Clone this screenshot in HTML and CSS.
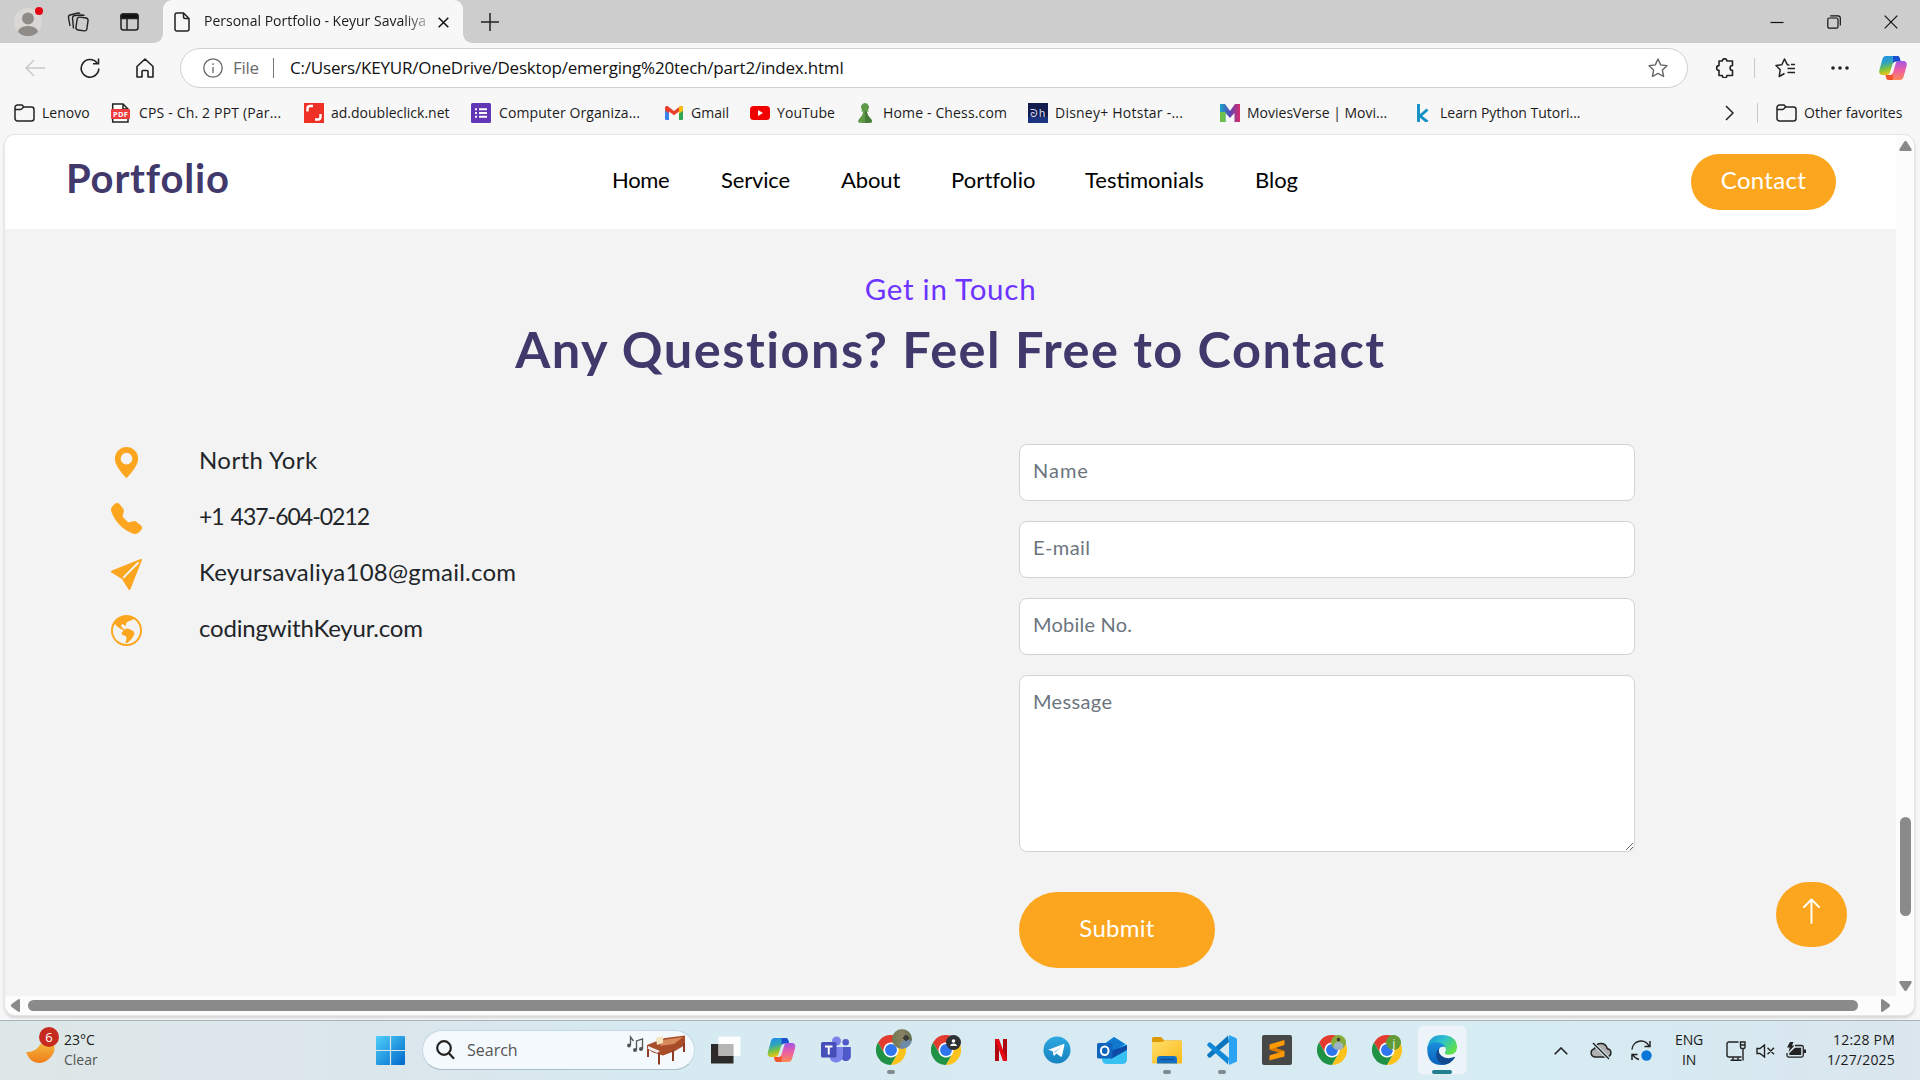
FILE: index.html
```html
<!DOCTYPE html>
<html lang="en">
<head>
<meta charset="utf-8">
<title>Personal Portfolio - Keyur Savaliya</title>
<link rel="stylesheet" href="styles.css">
</head>
<body>
<svg class="defs" aria-hidden="true">
  <defs>
    <linearGradient id="cp1" x1="0" y1="0" x2="0.3" y2="1"><stop offset="0" stop-color="#1a8df0"/><stop offset=".4" stop-color="#2fa3c0"/><stop offset=".7" stop-color="#7cc242"/><stop offset="1" stop-color="#f2c40f"/></linearGradient>
    <linearGradient id="cp2" x1="0" y1="0" x2="0" y2="1"><stop offset="0" stop-color="#a355e8"/><stop offset=".5" stop-color="#ee5fa0"/><stop offset="1" stop-color="#fb8a56"/></linearGradient>
    <linearGradient id="win" x1="0" y1="0" x2="1" y2="1"><stop offset="0" stop-color="#4fd0fb"/><stop offset="1" stop-color="#0067c9"/></linearGradient>
    <linearGradient id="moon" x1="0" y1="0" x2="0" y2="1"><stop offset="0" stop-color="#f3b53a"/><stop offset="1" stop-color="#ef7c1a"/></linearGradient>
    <linearGradient id="fold" x1="0" y1="0" x2="1" y2="1"><stop offset="0" stop-color="#ffdf6b"/><stop offset="1" stop-color="#fbb91a"/></linearGradient>
    <linearGradient id="edge1" x1="0" y1="0" x2="1" y2=".6"><stop offset="0" stop-color="#1a8fd6"/><stop offset=".5" stop-color="#2cc0d0"/><stop offset="1" stop-color="#5fe04a"/></linearGradient>
    <linearGradient id="edge2" x1="0" y1="0" x2="0" y2="1"><stop offset="0" stop-color="#1b8fdc"/><stop offset="1" stop-color="#0b62bd"/></linearGradient>
    <linearGradient id="tg" x1="0" y1="0" x2="0" y2="1"><stop offset="0" stop-color="#2fa8e0"/><stop offset="1" stop-color="#1583c0"/></linearGradient>
    <linearGradient id="mv" x1="0" y1="0" x2="1" y2="0"><stop offset="0" stop-color="#19a7c9"/><stop offset=".5" stop-color="#5946b5"/><stop offset="1" stop-color="#d92a6b"/></linearGradient>
    <symbol id="copilot" viewBox="0 0 28 26">
      <path d="M7 1h11c2 0 2.500 1 3 3l.6 2.500h-4.500c-2 0-3 1-3.600 3L11 17c-.6 2-1.500 3-3.500 3H3.500C.5 20-.3 17.500.5 14.500L3.500 4C4.200 2 5 1 7 1z" fill="url(#cp1)"/>
      <path d="M14 1h4c2 0 2.500 1 3 3l.6 2.500h-4.500c-1.400 0-2.300.5-3 1.600z" fill="#1c4fd0"/>
      <path d="M21 25H10c-2 0-2.500-1-3-3l-.5-2h4.500c2 0 2.600-1 3.200-3L16.500 9c.6-2 1.500-3 3.500-3h4.500c3 0 3.800 2.500 3 5.500L24.500 22c-.7 2-1.500 3-3.500 3z" fill="url(#cp2)"/>
      <path d="M14 25h-4c-2 0-2.500-1-3-3l-.5-2h4.500c1.400 0 2.300-.5 3-1.600z" fill="#f2542d"/>
    </symbol>
    <symbol id="chrome" viewBox="0 0 48 48">
      <circle cx="24" cy="24" r="13" fill="#fff"/>
      <path d="M24 12h20.800A24 24 0 0 0 3.200 12l10.400 18A12 12 0 0 1 24 12z" fill="#e33b2e"/>
      <path d="M3.200 12A24 24 0 0 0 24 48l10.400-18a12 12 0 0 1-20.800 0z" fill="#1f9246"/>
      <path d="M44.800 12A24 24 0 0 1 24 48l10.400-18A12 12 0 0 0 24 12z" fill="#fcc31e"/>
      <circle cx="24" cy="24" r="9.500" fill="#2f76ee"/>
    </symbol>
    <symbol id="folder" viewBox="0 0 21 18">
      <path d="M1 4V14.500A2.500 2.500 0 0 0 3.500 17H17.500A2.500 2.500 0 0 0 20 14.500V5.500A2.500 2.500 0 0 0 17.500 3H10L8 1H3.500A2.500 2.500 0 0 0 1 3.500zM1 5.500H6.500C8.500 5.500 8.500 3 10 3" fill="none" stroke="#222" stroke-width="1.500"/>
    </symbol>
  </defs>
</svg>

<div class="tabstrip">
  <div class="avatar">
    <svg width="28" height="28" viewBox="0 0 28 28"><circle cx="14" cy="14" r="14" fill="#d9d8d5"/><circle cx="14" cy="10.500" r="6" fill="#8f8c88"/><path d="M4 24c1-8 19-8 20 0a14 14 0 0 1-20 0z" fill="#8f8c88"/></svg>
    <i class="alert"></i>
  </div>
  <svg class="workspaces" width="22" height="20" viewBox="0 0 22 20" fill="none" stroke="#222" stroke-width="1.400"><rect x="9.500" y="5.500" width="11" height="13" rx="2.500" transform="rotate(8 15 12)"/><path d="M6.500 16.500 5.500 6Q5.500 4 7.500 3.500L15.500 3Q17 3 17.300 4"/><path d="M3 14 1.500 5.500Q1.200 3.500 3 3L11 1Q12.500.8 13 1.800"/></svg>
  <svg class="panes" width="19" height="18" viewBox="0 0 19 18" fill="none" stroke="#222" stroke-width="1.500"><rect x="1" y="1" width="17" height="16" rx="2.500"/><path d="M1 3.500V3a2 2 0 0 1 2-2h13a2 2 0 0 1 2 2v2.500H1z" fill="#111"/><path d="M7 5v12"/></svg>
  <div class="tab">
    <svg width="16" height="20" viewBox="0 0 16 20" fill="none" stroke="#222" stroke-width="1.500"><path d="M9.500 1H3a2 2 0 0 0-2 2v14a2 2 0 0 0 2 2h10a2 2 0 0 0 2-2V6.500zM9.500 1v4a1.500 1.500 0 0 0 1.500 1.500h4"/></svg>
    <span class="tab-title">Personal Portfolio - Keyur Savaliya</span>
    <svg width="11" height="11" viewBox="0 0 11 11" stroke="#111" stroke-width="1.500"><path d="M.7.700l9.600 9.600M10.300.700L.7 10.300"/></svg>
  </div>
  <svg class="newtab" width="18" height="18" viewBox="0 0 18 18" stroke="#222" stroke-width="1.500"><path d="M9 0v18M0 9h18"/></svg>
  <div class="winctl">
    <svg width="14" height="14" viewBox="0 0 14 14" stroke="#111" stroke-width="1.200"><path d="M.5 7.500h13"/></svg>
    <svg width="14" height="14" viewBox="0 0 14 14" fill="none" stroke="#111" stroke-width="1.200"><rect x=".8" y="3" width="10.200" height="10.200" rx="1.500"/><path d="M3.300.8H11a2.300 2.300 0 0 1 2.300 2.300V10.500"/></svg>
    <svg width="14" height="14" viewBox="0 0 14 14" stroke="#111" stroke-width="1.200"><path d="M.7.700l12.600 12.600M13.300.700L.7 13.300"/></svg>
  </div>
</div>

<div class="toolbar">
  <svg class="back" width="20" height="18" viewBox="0 0 20 18" fill="none" stroke="#c9c9c9" stroke-width="1.500"><path d="M20 9H1M9 1L1 9l8 8"/></svg>
  <svg class="reload" width="20" height="20" viewBox="0 0 20 20" fill="none" stroke="#222" stroke-width="1.600"><path d="M18.800 10.500A8.800 8.800 0 1 1 17 5M18.500.5V5.800H13"/></svg>
  <svg class="home" width="18" height="20" viewBox="0 0 18 20" fill="none" stroke="#222" stroke-width="1.600"><path d="M1 8.500 9 1l8 7.500V19h-5v-5.500a1 1 0 0 0-1-1H7a1 1 0 0 0-1 1V19H1z" stroke-linejoin="round"/></svg>
  <div class="address">
    <svg width="20" height="20" viewBox="0 0 20 20" fill="none" stroke="#666" stroke-width="1.300"><circle cx="10" cy="10" r="9.200"/><path d="M10 9v6M10 5.300v1.700"/></svg>
    <span class="scheme">File</span><i class="bar"></i>
    <span class="url">C:/Users/KEYUR/OneDrive/Desktop/emerging%20tech/part2/index.html</span>
    <svg class="star" width="20" height="20" viewBox="0 0 20 20" fill="none" stroke="#666" stroke-width="1.400" stroke-linejoin="round"><path d="M10 1l2.700 5.900 6.300.8-4.600 4.400 1.200 6.400L10 15.400l-5.600 3.100 1.200-6.400L1 7.700l6.300-.8z"/></svg>
  </div>
  <svg class="ext" width="19" height="20" viewBox="0 0 19 20" fill="none" stroke="#222" stroke-width="1.600" stroke-linejoin="round"><path d="M4 3h3.300a2.300 2.300 0 0 1 4.600 0H17.500V7.500a2.400 2.400 0 0 0 0 4.800V17.500h-5.600a2.300 2.300 0 0 1-4.600 0H4v-5.200a2.300 2.300 0 0 1 0-4.700z"/></svg>
  <i class="rule"></i>
  <svg class="favs" width="21" height="20" viewBox="0 0 21 20" fill="none" stroke="#222" stroke-width="1.500" stroke-linejoin="round"><path d="M14.500 7 12.300 6.700 9.500 1 6.800 6.700 1 7.500l4.200 4.200L4.200 18.500 9.500 15.500M12.500 10.500H20M12.500 14.500H20M16 6.500h4"/></svg>
  <svg class="more" width="18" height="4" viewBox="0 0 18 4" fill="#222"><circle cx="2" cy="2" r="1.800"/><circle cx="9" cy="2" r="1.800"/><circle cx="16" cy="2" r="1.800"/></svg>
  <svg class="copilot" width="28" height="26"><use href="#copilot"/></svg>
</div>

<div class="bookmarks">
  <a class="bm bm-lenovo"><svg width="21" height="18"><use href="#folder"/></svg><span>Lenovo</span></a>
  <a class="bm bm-cps"><svg width="19" height="20" viewBox="0 0 19 20"><path d="M1.700 19V1H12l5 5v13z" fill="#fff" stroke="#222" stroke-width="1.500"/><path d="M12 1v5h5" fill="none" stroke="#222" stroke-width="1.500"/><rect y="6" width="19" height="10" rx="1" fill="#ee3b3b"/><text x="9.500" y="13.600" class="pdf-label">PDF</text></svg><span>CPS - Ch. 2 PPT (Par...</span></a>
  <a class="bm bm-ad"><svg width="20" height="20" viewBox="0 0 20 20"><path fill="#ee3124" d="M0 0h20v20H0z"/><path d="M3.500 8.500V5.500a2.500 2.500 0 0 1 2.500-2.500h3M16.500 11v3a2.500 2.500 0 0 1-2.500 2.500h-3" fill="none" stroke="#fff" stroke-width="2.400"/></svg><span>ad.doubleclick.net</span></a>
  <a class="bm bm-forms"><svg width="20" height="20" viewBox="0 0 20 20"><rect width="20" height="20" rx="1.500" fill="#6236b5"/><path d="M4 6.200h2M8 6.200h8M4 10h2M8 10h8M4 13.800h2M8 13.800h8" stroke="#fff" stroke-width="2"/></svg><span>Computer Organiza...</span></a>
  <a class="bm bm-gmail"><svg width="18" height="14" viewBox="0 0 18 14"><path d="M0 2v11a1 1 0 0 0 1 1h3V5z" fill="#3b82ee"/><path d="M18 2v11a1 1 0 0 1-1 1h-3V5z" fill="#30a853"/><path d="M14 1.500 18 2v2.500L14 7.500z" fill="#fbbc04"/><path d="M0 1.800C0 0 2-.4 3.200.5L9 5l5.800-4.500C16-.4 18 0 18 1.800L14 5.500 9 9.300 4 5.500V7.500L0 4.500z" fill="#e8402f"/><path d="M14 1.200v6.300l4-3V1.800C18 0 16-.4 14.800.5z" fill="#fbbc04"/></svg><span>Gmail</span></a>
  <a class="bm bm-yt"><svg width="20" height="14" viewBox="0 0 20 14"><rect width="20" height="14" rx="3.500" fill="#f00000"/><path d="M8 4v6l5-3z" fill="#fff"/></svg><span>YouTube</span></a>
  <a class="bm bm-chess"><svg width="14" height="20" viewBox="0 0 14 20"><path d="M7 0a4 4 0 0 1 2.800 6.800L11 8.500H8.800Q9 12 12 15q2 1.500 2 4.300Q7 21 0 19.300 0 16.500 2 15q3-3 3.200-6.500H3L4.200 6.800A4 4 0 0 1 7 0z" fill="#5d9948"/><path d="M8.800 8.500Q9 12 12 15q2 1.500 2 4.300-3 .7-7 .7V8.500z" fill="#457a37"/></svg><span>Home - Chess.com</span></a>
  <a class="bm bm-hotstar"><svg width="20" height="20" viewBox="0 0 20 20"><path fill="#131c4f" d="M0 0h20v20H0z"/><path fill="#1c3380" d="M0 14h20v6H0z"/><text x="10" y="13.500" class="hs-label">ᘐh</text></svg><span>Disney+ Hotstar -...</span></a>
  <a class="bm bm-movies"><svg width="20" height="18" viewBox="0 0 20 18"><path d="M0 0h5l5 7 5-7h5v18h-5.500V9L10 14 5.500 9v9H0z" fill="url(#mv)"/><path d="M0 8h5.500v10H0z" fill="#6dc04b"/></svg><span>MoviesVerse | Movi...</span></a>
  <a class="bm bm-python"><svg width="12" height="18" viewBox="0 0 12 18"><path d="M1.500 0v18M10.500 5.500 3 12l7.500 6" fill="none" stroke="#1590c4" stroke-width="2.900"/></svg><span>Learn Python Tutori...</span></a>
  <svg class="chev" width="9" height="16" viewBox="0 0 9 16" fill="none" stroke="#222" stroke-width="1.500"><path d="M1 1l7 7-7 7"/></svg>
  <i class="rule"></i>
  <a class="bm bm-other"><svg width="21" height="18"><use href="#folder"/></svg><span>Other favorites</span></a>
</div>

<div class="frame">
  <main class="page">
    <header class="site-header">
      <div class="brand">Portfolio</div>
      <nav class="nav">
        <a class="n-home">Home</a><a class="n-service">Service</a><a class="n-about">About</a><a class="n-portfolio">Portfolio</a><a class="n-test">Testimonials</a><a class="n-blog">Blog</a>
      </nav>
      <a class="btn-contact">Contact</a>
    </header>
    <section class="contact">
      <h3>Get in Touch</h3>
      <h2>Any Questions? Feel Free to Contact</h2>
      <div class="columns">
        <ul class="info">
          <li><svg viewBox="0 0 16 16"><path d="M8 16s6-5.686 6-10A6 6 0 0 0 2 6c0 4.314 6 10 6 10zm0-7a3 3 0 1 1 0-6 3 3 0 0 1 0 6z"/></svg><span class="i-city">North York</span></li>
          <li><svg viewBox="0 0 16 16"><path d="M1.885.511a1.745 1.745 0 0 1 2.610.163L6.290 2.980c.329.423.445.974.315 1.494l-.547 2.190a.678.678 0 0 0 .178.643l2.457 2.457a.678.678 0 0 0 .644.178l2.189-.547a1.745 1.745 0 0 1 1.494.315l2.306 1.794c.829.645.905 1.870.163 2.611l-1.034 1.034c-.74.740-1.846 1.065-2.877.702a18.634 18.634 0 0 1-7.010-4.420 18.634 18.634 0 0 1-4.420-7.009c-.362-1.030-.037-2.137.703-2.877L1.885.511z"/></svg><span class="i-phone">+1 437-604-0212</span></li>
          <li><svg viewBox="0 0 16 16"><path d="M15.964.686a.5.5 0 0 0-.65-.65L.767 5.855H.766l-.452.18a.5.5 0 0 0-.082.887l.41.260.001.002 4.995 3.178 3.178 4.995.002.002.260.410a.5.5 0 0 0 .886-.083l6-15Zm-1.833 1.890L6.637 10.070l-.215-.338a.5.5 0 0 0-.154-.154l-.338-.215 7.494-7.494 1.178-.471-.470 1.178Z"/></svg><span class="i-mail">Keyursavaliya108@gmail.com</span></li>
          <li><svg viewBox="0 0 16 16"><path d="M8 0a8 8 0 1 0 0 16A8 8 0 0 0 8 0ZM2.040 4.326c.325 1.329 2.532 2.540 3.717 3.190.48.263.793.434.743.484-.08.08-.162.158-.242.234-.416.396-.787.749-.758 1.266.035.634.618.824 1.214 1.017.577.188 1.168.38 1.286.983.082.417-.075.988-.22 1.520-.215.782-.406 1.480.22 1.480 1.500-.5 3.798-3.186 4-5 .138-1.243-2-2-3.500-2.500-.478-.16-.755.081-.99.284-.172.15-.322.279-.51.216-.445-.148-2.500-2-1.500-2.500.78-.39.952-.171 1.227.182.078.099.163.208.273.318.609.304.662-.132.723-.633.039-.322.081-.671.277-.867.434-.434 1.265-.791 2.028-1.120.712-.306 1.365-.587 1.579-.88A7 7 0 1 1 2.040 4.327Z"/></svg><span class="i-site">codingwithKeyur.com</span></li>
        </ul>
        <form class="form">
          <input class="f-name" placeholder="Name">
          <input class="f-mail" placeholder="E-mail">
          <input class="f-mobile" placeholder="Mobile No.">
          <textarea class="f-msg" placeholder="Message"></textarea>
          <button type="button">Submit</button>
        </form>
      </div>
    </section>
    <a class="to-top"><svg width="19" height="26" viewBox="0 0 19 26" fill="none" stroke="#fff" stroke-width="1.900" stroke-linecap="round" stroke-linejoin="round"><path d="M9.500 25V1.500M2 9l7.500-7.500L17 9"/></svg></a>
  </main>
  <div class="vscroll">
    <svg width="13" height="10" viewBox="0 0 13 10"><path d="M6.500 0q1 0 1.500 1l4.500 7q.8 2-1 2h-10q-1.800 0-1-2L5 1q.5-1 1.500-1z"/></svg>
    <i class="thumb"></i>
    <svg width="13" height="10" viewBox="0 0 13 10"><path d="M6.500 10q1 0 1.500-1l4.500-7q.8-2-1-2h-10q-1.800 0-1 2L5 9q.5 1 1.500 1z"/></svg>
  </div>
  <div class="hscroll">
    <svg width="9" height="13" viewBox="0 0 9 13"><path d="M0 6.500q0-1 1-1.700L7 .5Q9-.5 9 1v11q0 1.500-2 .5L1 8.200Q0 7.500 0 6.500z"/></svg>
    <i class="thumb"></i>
    <svg width="9" height="13" viewBox="0 0 9 13"><path d="M9 6.500q0-1-1-1.700L2 .5Q0-.5 0 1v11q0 1.500 2 .5l6-4.300q1-.7 1-1.700z"/></svg>
  </div>
</div>

<div class="taskbar">
  <div class="weather">
    <div class="moon"><svg width="29" height="19" viewBox="0 0 29 19"><path d="M0 8q9 1 14.500-8H28q2 8-4 14-5 5-11.500 5Q4 19 0 8z" fill="url(#moon)"/></svg><b>6</b></div>
    <div class="two"><span>23°C</span><span class="dim">Clear</span></div>
  </div>
  <svg class="start" width="29" height="29" viewBox="0 0 29 29" fill="url(#win)"><path d="M1 0h12.900v13.900H0V1a1 1 0 0 1 1-1zM15.100 0H28a1 1 0 0 1 1 1v12.900H15.100zM0 15.100h13.900V29H1a1 1 0 0 1-1-1zM15.100 15.100H29V28a1 1 0 0 1-1 1H15.100z"/></svg>
  <div class="search">
    <svg width="19" height="20" viewBox="0 0 19 20" fill="none" stroke="#222" stroke-width="2.200"><circle cx="8" cy="8" r="6.800"/><path d="M12.500 12.800 18 18.700"/></svg>
    <span>Search</span>
    <svg class="piano" width="59" height="30" viewBox="0 0 59 30"><g fill="none" stroke="#555" stroke-width="1.300"><path d="M3.500 10V2l3 4M9.500 15V6l6-2v10"/></g><g fill="#555"><circle cx="2" cy="10.500" r="2"/><circle cx="8" cy="15" r="2"/><circle cx="14" cy="14" r="2"/></g><path d="M20 10 30 6l8-3 20-2.500v9.500l-10 6-12 4.500-10-3-6-4z" fill="#a84c2a"/><path d="M36 5 56 2l-9 7-14 2z" fill="#d98a5d"/><path d="M21 11l12 5-3 2-9-4z" fill="#eee"/><path d="M29 3l7-2v7l-6 2z" fill="#f4e3bf"/><path d="M21 14v8M32 18v11.500M46 15v11M57 8v9" stroke="#8d3c22" stroke-width="2"/></svg>
  </div>
  <div class="apps">
    <div class="app"><svg width="30" height="30" viewBox="0 0 30 30"><path d="M0 9h22.500v19.500H0z" fill="#2c2b29"/><rect x="7.500" y="1.500" width="22" height="19.500" rx="1" fill="#fff" opacity=".92"/><path d="M7.500 9h15v12h-15z" fill="#b5b5b4"/></svg></div>
    <div class="app"><svg width="29" height="26"><use href="#copilot"/></svg></div>
    <div class="app"><svg width="30" height="28" viewBox="0 0 30 28"><circle cx="15.500" cy="5" r="4.500" fill="#7b83eb"/><circle cx="24.700" cy="6.300" r="3.300" fill="#5059c9"/><path d="M20 11h9.800v8a5 5 0 0 1-9.800 2z" fill="#5059c9"/><path d="M9 11h13v9a7 7 0 0 1-13 3z" fill="#7b83eb"/><rect y="6" width="15.500" height="15.500" rx="1.500" fill="#464eb8"/><path d="M4 10.500h7.500M7.750 10.500v8" stroke="#fff" stroke-width="2"/></svg></div>
    <div class="app run"><svg width="30" height="30"><use href="#chrome"/></svg><i class="badge photo"></i></div>
    <div class="app"><svg width="30" height="30"><use href="#chrome"/></svg><i class="badge dark"><svg width="7" height="8" viewBox="0 0 7 8" fill="#fff"><circle cx="3.500" cy="2" r="1.800"/><path d="M0 7Q.5 4.500 3.500 4.500T7 7z"/></svg></i></div>
    <div class="app"><svg width="12" height="22" viewBox="0 0 12 22"><path d="M0 0h4v22H0zM8 0h4v22H8z" fill="#b00710"/><path d="M0 0h4l8 22H8z" fill="#e50914"/></svg></div>
    <div class="app"><svg width="28" height="28" viewBox="0 0 28 28"><circle cx="14" cy="14" r="13.500" fill="url(#tg)"/><path d="M5.500 13.800 20.500 8q1.200-.3.900 1.200L19 20q-.4 1.300-1.500.6L13.500 17.500l-2 2q-.8.700-1-.4l-1-4-3.900-1q-1-.2-.1-.3z" fill="#fff"/><path d="M10.500 16 18.500 10.500 12 17z" fill="#a9cfe6"/></svg></div>
    <div class="app"><svg width="30" height="27" viewBox="0 0 30 27"><path d="M6 8 17 0l13 8v14q0 5-5 5H10q-5 0-5-5z" fill="#36c1f2"/><path d="M6 8 17 0l11 7-16 11z" fill="#1079cf"/><path d="M14 14 30 8v5L14 22z" fill="#0c4aa6"/><rect y="6" width="15.500" height="15.500" rx="1.500" fill="#0f64bd"/><ellipse cx="7.700" cy="13.700" rx="3.800" ry="4.300" fill="none" stroke="#fff" stroke-width="2"/></svg></div>
    <div class="app run"><svg width="30" height="27" viewBox="0 0 30 27"><path d="M0 1.500Q0 0 1.500 0H9l3.500 3.500H28.500Q30 3.500 30 5v5H0z" fill="#dc9a06"/><path d="M0 5H10l3-1.500H28.500Q30 3.500 30 5V26.500H0z" fill="url(#fold)"/><path d="M5 26.500V22a3 3 0 0 1 3-3h14a3 3 0 0 1 3 3v4.500z" fill="#1470c4"/><path d="M8.500 22.500h13" stroke="#0b4d92" stroke-width="1.400"/></svg></div>
    <div class="app run"><svg width="30" height="30" viewBox="0 0 30 30"><path d="M22 7 3.500 22.500Q2.500 23.300 1.500 22.300L.5 21q-.8-1 .2-2L21 .5z" fill="#0b76bd"/><path d="M22 23 3.500 7.500Q2.500 6.700 1.500 7.700L.5 9q-.8 1 .2 2L21 29.500z" fill="#1289d8"/><path d="M22 0l7 3q1 .5 1 1.500v21q0 1-1 1.500l-7 3z" fill="#2aa3f3"/></svg></div>
    <div class="app"><svg width="30" height="30" viewBox="0 0 30 30"><rect width="30" height="30" rx="2" fill="#474747"/><path d="M22.500 5v5L13 13l9.500 3v5.500L7.500 25.500v-5L17 17.500 7.500 14.500V9.500z" fill="#ff9a05"/><path d="M7.500 14.500 22.500 10l-9.500 3 9.500 3-5.500 1.500z" fill="#d97900"/></svg></div>
    <div class="app"><svg width="30" height="30"><use href="#chrome"/></svg><i class="badge park"></i></div>
    <div class="app"><svg width="30" height="30"><use href="#chrome"/></svg><i class="badge jay">j</i></div>
    <div class="app current"><svg width="30" height="30" viewBox="0 0 30 30"><path d="M.3 13Q2 0 15 0 30 .5 30 12.500q-.5 7-8 7.300-5.500 0-3.700-3Q20 14 17 11 9 5.500.3 13z" fill="url(#edge1)"/><path d="M.3 12.500Q4 6 11 7.500q6 1.200 7 4.500-6-1.500-6.500 5Q12 26 24 26q-4 4-9.500 4Q-.5 29.500.3 12.500z" fill="url(#edge2)"/><path d="M12 13.500q-4 3.500-2.500 9Q12 29 17 29.800 24 29 28 22.500q.3-1-1-.5-4.500 2-9.500.5-6.500-2.500-5.500-9z" fill="#124a91"/></svg></div>
  </div>
  <div class="tray">
    <svg class="up" width="14" height="8" viewBox="0 0 14 8" fill="none" stroke="#222" stroke-width="1.600"><path d="M.7 7.300 7 1l6.300 6.300"/></svg>
    <svg class="cloud" width="22" height="18" viewBox="0 0 22 18"><path d="M5 15a4.200 4.200 0 0 1-.5-8.300Q6 1.500 11 1.500t6.300 5.200a4.200 4.200 0 0 1 0 8.300z" fill="#b0b0b0" stroke="#222" stroke-width="1.500"/><path d="M3 1l16 16" stroke="#d8eaf1" stroke-width="3.400"/><path d="M3 1l16 16" stroke="#222" stroke-width="1.500"/></svg>
    <svg class="sync" width="21" height="21" viewBox="0 0 21 21"><path d="M1 9.500A9 9 0 0 1 18 6M19 1v5.500h-5.500M1 20v-5.500h5.500M2 15q2 3.500 6 4.500" fill="none" stroke="#222" stroke-width="1.500"/><circle cx="15.500" cy="15.500" r="5.200" fill="#0a76d8"/></svg>
    <div class="two lang"><span>ENG</span><span>IN</span></div>
    <svg class="net" width="20" height="20" viewBox="0 0 20 20" fill="none" stroke="#222" stroke-width="1.400"><path d="M12.500 1H3a2 2 0 0 0-2 2v11a2 2 0 0 0 2 2h12.500M4.500 19.300h11M7 16v3M12 16v3M14.500 1h4.500v5q0 1.500-1.500 1.500h-1.500Q14.500 7.500 14.500 6zM14.500 4H19M17 8v11.500"/></svg>
    <svg class="vol" width="19" height="14" viewBox="0 0 19 14" fill="none" stroke="#222" stroke-width="1.400"><path d="M1 4.500h3L8.500 1v12L4 9.500H1zM11.500 3.800l6.500 6.500M18 3.800l-6.500 6.500"/></svg>
    <svg class="bat" width="20" height="17" viewBox="0 0 20 17"><path d="M9 3.500h6.500A1.800 1.800 0 0 1 17.300 5.300v8a1.800 1.800 0 0 1-1.800 1.800H2.800A1.800 1.800 0 0 1 1 13.300V11" fill="none" stroke="#222" stroke-width="1.300"/><path d="M9 5.700h6.200v7.200H3.300V11z" fill="#222"/><path d="M18 7.500h2v3.500h-2zM4 0h3.500L6 3.500h2.500L2.500 10 3.800 5.500H1z" fill="#222"/></svg>
    <div class="two clock"><span>12:28 PM</span><span>1/27/2025</span></div>
  </div>
</div>
</body>
</html>
```
FILE: styles.css
```css
* { box-sizing: border-box; }
body {
  margin: 0;
  width: 1920px;
  height: 1080px;
  overflow: hidden;
  display: flex;
  flex-direction: column;
  background: #f7f7f7;
  color: #1b1b1b;
  font: 14px/20px "Open Sans", "Noto Sans", sans-serif;
}
svg { display: block; flex: none; }
span, a { white-space: nowrap; }
.defs { position: absolute; width: 0; height: 0; }

/* Tab strip */
.tabstrip { height: 43px; flex: none; display: flex; align-items: center; background: #cdcdcd; }
.avatar { position: relative; margin-left: 14px; width: 28px; }
.alert { position: absolute; right: -1px; top: -1px; width: 8px; height: 8px; border-radius: 50%; background: #e30613; }
.workspaces { margin-left: 25px; }
.panes { margin: 0 24px 0 31px; }
.tab {
  position: relative;
  align-self: stretch;
  width: 300px;
  padding: 1px 14px 0 11px;
  display: flex;
  align-items: center;
  background: #f7f7f7;
  border-radius: 9px 9px 0 0;
}
.tab::before, .tab::after { content: ""; position: absolute; bottom: 0; width: 9px; height: 9px; }
.tab::before { left: -9px; background: radial-gradient(circle at 0 0, transparent 8.500px, #f7f7f7 9px); }
.tab::after { right: -9px; background: radial-gradient(circle at 100% 0, transparent 8.500px, #f7f7f7 9px); }
.tab-title {
  margin: 0 11px 0 14px;
  width: 223px;
  padding-bottom: 2px;
  overflow: hidden;
  color: #1b1b1b;
  -webkit-mask-image: linear-gradient(90deg, #000 90%, rgba(0,0,0,.3));
  mask-image: linear-gradient(90deg, #000 90%, rgba(0,0,0,.3));
}
.newtab { margin-left: 18px; }
.winctl { margin: 0 22px 0 auto; display: flex; gap: 43px; }

/* Toolbar */
.toolbar { height: 50px; flex: none; display: flex; align-items: center; }
.back { margin-left: 25px; }
.reload { margin-left: 35px; }
.home { margin: 0 26px 0 36px; }
.address {
  width: 1508px;
  height: 40px;
  padding: 0 19px 0 22px;
  display: flex;
  align-items: center;
  background: #fff;
  border: 1px solid #cfcfcf;
  border-radius: 20px;
  font-size: 17px;
}
.scheme { width: 26px; margin-left: 10px; letter-spacing: -.3px; color: #6a6a6a; }
.bar { width: 1px; height: 20px; margin: 0 16px 0 14px; background: #777; }
.url { letter-spacing: -.2px; color: #111; }
.star { margin-left: auto; }
.rule { width: 1px; height: 20px; background: #c8c8c8; }
.ext { margin: 0 20px 0 27px; }
.favs { margin-left: 20px; }
.more { margin-left: 35px; }
.copilot { margin-left: 30px; }

/* Bookmarks bar */
.bookmarks { height: 40px; flex: none; display: flex; align-items: center; padding-left: 14px; }
.bm { display: flex; align-items: center; }
.bm svg { margin-right: 7px; }
.bm span { width: var(--w); padding-bottom: 1px; }
.bm-lenovo { --w: 48px; margin-right: 21px; }
.bm-cps { --w: 142px; margin-right: 23px; letter-spacing: .17px; }
.bm-cps svg { margin-right: 9px; }
.bm-ad { --w: 120px; margin-right: 20px; }
.bm-forms { --w: 141px; margin-right: 25px; letter-spacing: .1px; }
.bm-forms svg { margin-right: 8px; }
.bm-gmail { --w: 39px; margin-right: 20px; }
.bm-gmail svg { margin-right: 8px; }
.bm-yt { --w: 58px; margin-right: 23px; letter-spacing: .07px; }
.bm-chess { --w: 125px; margin-right: 20px; letter-spacing: .15px; }
.bm-chess svg { margin-right: 11px; }
.bm-hotstar { --w: 128px; margin-right: 37px; letter-spacing: .23px; }
.bm-movies { --w: 139px; margin-right: 31px; }
.bm-python { --w: 142px; }
.bm-python svg { margin-right: 11px; }
.bm-other { margin-left: 18px; --w: 98px; }
.chev { margin: 0 23px 0 143px; }
.pdf-label { font: 700 7.500px "Open Sans", sans-serif; fill: #fff; text-anchor: middle; }
.hs-label { font: 400 10.500px "DejaVu Sans", sans-serif; fill: #d5dcf5; text-anchor: middle; }

/* Page viewport with its scrollbars */
.frame {
  flex: none;
  width: 1909px;
  height: 880px;
  margin: 2px 0 0 5px;
  display: grid;
  grid-template: 861px 19px / 1891px 18px;
  border-radius: 10px;
  overflow: hidden;
  background: #fcfcfc;
  box-shadow: 0 0 0 1px #e6e6e6, 0 2px 3px 1px rgba(0,0,0,.14);
}
.page { position: relative; background: #f3f3f3; font-family: Lato, "Open Sans", sans-serif; }
.vscroll { display: flex; flex-direction: column; align-items: center; padding: 6px 0 5px; fill: #8a8a8a; }
.vscroll .thumb { width: 11px; height: 99px; margin: 666px 0 auto; border-radius: 6px; background: #8a8a8a; }
.hscroll { display: flex; align-items: center; padding: 0 6px; width: 1891px; height: 19px; fill: #8a8a8a; }
.hscroll .thumb { width: 1830px; height: 11px; margin: 0 auto 0 8px; border-radius: 6px; background: #8a8a8a; }

/* Site header */
.site-header { height: 94px; display: flex; align-items: center; padding: 0 60px 0 61px; background: #fff; }
.brand { width: 164px; padding-bottom: 8px; font-size: 40px; line-height: 48px; font-weight: 700; letter-spacing: .8px; color: #41386b; }
.nav { display: flex; margin-left: 382px; padding-bottom: 4px; font-size: 22px; line-height: 28px; color: #000; }
.nav a { margin-right: 50px; }
.n-home { width: 59px; letter-spacing: -.3px; }
.n-service { width: 70px; letter-spacing: -.17px; }
.n-about { width: 60px; letter-spacing: -.1px; }
.n-portfolio { width: 84px; letter-spacing: .09px; }
.n-test { width: 120px; letter-spacing: 0; }
.nav .n-blog { width: 44px; margin-right: 0; }
.btn-contact { width: 145px; height: 56px; margin-left: auto; padding-bottom: 4px; display: flex; align-items: center; justify-content: center; border-radius: 28px; background: #fca61f; color: #fff; font-size: 24px; letter-spacing: .3px; }

/* Contact section */
.contact { padding-top: 42px; }
h3, h2 { margin: 0; text-align: center; }
h3 { font-size: 29.500px; line-height: 36px; font-weight: 400; letter-spacing: .75px; color: #6d33ff; }
h2 { margin-top: 12px; font-size: 50.500px; line-height: 60px; font-weight: 700; letter-spacing: 1.500px; color: #41386b; }
.columns { display: flex; margin-top: 65px; }
.info { width: 1014px; margin: 0; padding: 3px 0 0 106px; list-style: none; display: flex; flex-direction: column; gap: 25px; }
.info li { height: 31px; display: flex; align-items: center; gap: 57px; font-size: 24px; line-height: 30px; color: #212529; }
.info svg { width: 31px; height: 31px; fill: #fca61f; }
.info span { padding-bottom: 5px; }
.i-city { letter-spacing: .41px; }
.info .i-phone { font-size: 23px; letter-spacing: -1px; word-spacing: 2px; }
.i-mail { letter-spacing: .24px; }
.i-site { letter-spacing: -.19px; }
.form { width: 616px; display: flex; flex-direction: column; align-items: flex-start; gap: 20px; }
.form input, .form textarea {
  width: 616px;
  height: 57px;
  margin: 0;
  padding: 0 13px 5px;
  border: 1px solid #ced4da;
  border-radius: 8px;
  background: #fff;
  font: 20px/26px Lato, sans-serif;
}
.form textarea { height: 177px; padding-top: 12px; }
::placeholder { color: #6c757d; opacity: 1; }
.form .f-name { letter-spacing: 1px; }
.form .f-mail { letter-spacing: .42px; }
.form .f-mobile { letter-spacing: .22px; }
.form .f-msg { letter-spacing: .35px; }
.form button { width: 196px; height: 76px; margin-top: 20px; padding: 0 0 6px; border: 0; border-radius: 38px; background: #fca61f; color: #fff; font: 24px Lato, sans-serif; letter-spacing: .26px; }
.to-top { position: absolute; left: 1770.500px; top: 746.500px; width: 71px; height: 65px; padding-bottom: 7px; display: flex; align-items: center; justify-content: center; border-radius: 33px; background: #fca61f; }

/* Taskbar */
.taskbar {
  height: 60px;
  margin-top: auto;
  flex: none;
  display: flex;
  align-items: center;
  border-top: 1px solid #a9b4b9;
  background: linear-gradient(90deg, #dde7e6 0, #dde6ec 12%, #dae7ed 24%, #d6eaf2 36%, #d8eaf2 60%, #d6ecf3 80%, #d9e7ef 95%, #dbe6ee 100%);
}
.weather { display: flex; align-items: center; margin-left: 26px; width: 350px; }
.moon { position: relative; width: 32px; padding-top: 6px; margin-right: 6px; }
.moon b { position: absolute; right: -1px; top: -11px; width: 20px; height: 20px; border-radius: 50%; background: #c72b20; color: #fff; text-align: center; font-weight: 400; font-size: 13px; }
.two { display: flex; flex-direction: column; padding-bottom: 1px; }
.two span { line-height: 20px; }
.dim { color: #555; }
.search { width: 273px; height: 40px; margin-left: 17px; padding: 0 8px 0 13px; display: flex; align-items: center; border-radius: 20px; border: 1px solid #c3d8e3; border-bottom-color: #a9bec9; background: #f3f9fc; font-size: 16px; color: #555; }
.search span { margin-left: 12px; }
.piano { margin-left: auto; }
.start, .search, .apps { position: relative; top: -.5px; }
.apps { display: flex; margin-left: 3.500px; }
.app { position: relative; width: 55.080px; height: 48px; display: flex; align-items: center; justify-content: center; }
.run::after, .current::after { content: ""; position: absolute; bottom: 0; left: 23.500px; width: 8px; height: 4px; border-radius: 2px; background: #7f8b91; }
.current { width: 48px; margin-left: 3.500px; border-radius: 5px; background: #ecf4fa; box-shadow: 0 0 0 1px #e2edf4; }
.current::after { left: 14px; width: 20px; background: #20808f; }
.badge { position: absolute; left: 27px; top: 9px; width: 15px; height: 15px; border-radius: 50%; display: flex; align-items: center; justify-content: center; }
.photo { left: 28px; top: 3px; width: 20px; height: 20px; background: radial-gradient(circle at 70% 45%, #3c3a3a 15%, transparent 16%), radial-gradient(circle at 75% 90%, #6f8aa6 30%, transparent 32%), linear-gradient(90deg, #6d7a52, #8a8064 50%, #5f6f4b); }
.dark { background: #2d3134; }
.park { background: radial-gradient(circle at 50% 30%, #4a3b33 14%, transparent 16%), radial-gradient(circle at 50% 80%, #9db4c4 34%, transparent 36%), #86ad3c; }
.jay { background: #5f9a35; color: #fff; font-style: normal; font-size: 11px; line-height: 14px; }
.tray { display: flex; align-items: center; margin: 0 25px 0 auto; color: #1b1b1b; }
.cloud { margin: 0 19px 0 22px; }
.lang { width: 28px; margin: 0 23px 0 23px; align-items: center; letter-spacing: -.2px; }
.vol { margin: 0 11px 0 10px; }
.clock { width: 68px; margin-left: 21px; align-items: flex-end; letter-spacing: .2px; }
```
